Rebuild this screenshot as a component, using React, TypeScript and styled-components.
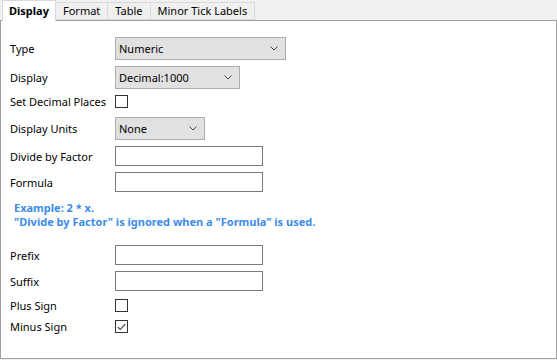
import React from "react";
import styled, { createGlobalStyle } from "styled-components";

const Global = createGlobalStyle`
  html, body { margin: 0; padding: 0; background: #f0f0f0; }
  body { font-family: "Segoe UI", "Noto Sans", "Liberation Sans", sans-serif; font-size: 11px; color: #000; }
`;

const Window = styled.div`
  width: 557px;
  height: 360px;
  background: #f0f0f0;
  display: flex;
  flex-direction: column;
`;

const TabStrip = styled.div`
  display: flex;
  align-items: flex-end;
  height: 20px;
  padding-left: 2px;
  position: relative;
  z-index: 1;
`;

const Tab = styled.div<{ $active?: boolean }>`
  box-sizing: border-box;
  height: ${(p) => (p.$active ? "21px" : "18px")};
  margin-bottom: ${(p) => (p.$active ? "-1px" : "0")};
  margin-left: -1px;
  padding: 0 ${(p) => (p.$active ? "6px" : "7px")};
  border: 1px solid #d9d9d9;
  border-bottom: ${(p) => (p.$active ? "none" : "1px solid #d9d9d9")};
  background: ${(p) => (p.$active ? "#ffffff" : "#f0f0f0")};
  font-weight: ${(p) => (p.$active ? 700 : 400)};
  line-height: ${(p) => (p.$active ? "20px" : "16px")};
  white-space: nowrap;
  &:first-child { margin-left: 0; }
`;

const Panel = styled.div`
  box-sizing: border-box;
  width: 557px;
  height: 339px;
  background: #fff;
  border: 1px solid #a0a0a0;
  padding: 16px 0 0 9px;
  display: flex;
  flex-direction: column;
`;

const Row = styled.div<{ $mt: number; $h: number }>`
  display: flex;
  align-items: center;
  margin-top: ${(p) => p.$mt}px;
  height: ${(p) => p.$h}px;
`;

const Label = styled.div`
  width: 105px;
  flex-shrink: 0;
  white-space: nowrap;
`;

const Combo = styled.div<{ $w: number }>`
  box-sizing: border-box;
  width: ${(p) => p.$w}px;
  height: 23px;
  background: #e1e1e1;
  border: 1px solid #adadad;
  display: flex;
  align-items: center;
  justify-content: space-between;
  padding: 0 7px 0 3px;
`;

const TextBox = styled.div`
  box-sizing: border-box;
  width: 148px;
  height: 20px;
  background: #fff;
  border: 1px solid #7a7a7a;
`;

const CheckBox = styled.div`
  box-sizing: border-box;
  width: 13px;
  height: 13px;
  border: 1px solid #333;
  background: #fff;
  display: flex;
  align-items: center;
  justify-content: center;
`;

const Note = styled.div`
  margin-top: 9px;
  padding-left: 4px;
  color: #3c8ce8;
  font-weight: 700;
  display: flex;
  flex-direction: column;
`;

const NoteLine = styled.div`
  height: 14px;
  line-height: 14px;
  white-space: nowrap;
`;

const Chevron = () => (
  <svg width="8" height="5" viewBox="0 0 8 5">
    <path d="M0.5 0.5 L4 4 L7.5 0.5" fill="none" stroke="#444" strokeWidth="1" />
  </svg>
);

const Check = () => (
  <svg width="9" height="8" viewBox="0 0 9 8">
    <path d="M0.8 4 L3.3 6.5 L8.3 1" fill="none" stroke="#555" strokeWidth="1.2" />
  </svg>
);

export default function App() {
  return (
    <Window>
      <Global />
      <TabStrip>
        <Tab $active>Display</Tab>
        <Tab>Format</Tab>
        <Tab>Table</Tab>
        <Tab>Minor Tick Labels</Tab>
      </TabStrip>
      <Panel>
        <Row $mt={0} $h={23}>
          <Label>Type</Label>
          <Combo $w={171}>Numeric<Chevron /></Combo>
        </Row>
        <Row $mt={6} $h={23}>
          <Label>Display</Label>
          <Combo $w={125}>Decimal:1000<Chevron /></Combo>
        </Row>
        <Row $mt={6} $h={13}>
          <Label>Set Decimal Places</Label>
          <CheckBox />
        </Row>
        <Row $mt={9} $h={23}>
          <Label>Display Units</Label>
          <Combo $w={90}>None<Chevron /></Combo>
        </Row>
        <Row $mt={6} $h={20}>
          <Label>Divide by Factor</Label>
          <TextBox />
        </Row>
        <Row $mt={6} $h={20}>
          <Label>Formula</Label>
          <TextBox />
        </Row>
        <Note>
          <NoteLine>Example: 2 * x.</NoteLine>
          <NoteLine>"Divide by Factor" is ignored when a "Formula" is used.</NoteLine>
        </Note>
        <Row $mt={16} $h={20}>
          <Label>Prefix</Label>
          <TextBox />
        </Row>
        <Row $mt={6} $h={20}>
          <Label>Suffix</Label>
          <TextBox />
        </Row>
        <Row $mt={8} $h={13}>
          <Label>Plus Sign</Label>
          <CheckBox />
        </Row>
        <Row $mt={8} $h={13}>
          <Label>Minus Sign</Label>
          <CheckBox><Check /></CheckBox>
        </Row>
      </Panel>
    </Window>
  );
}
